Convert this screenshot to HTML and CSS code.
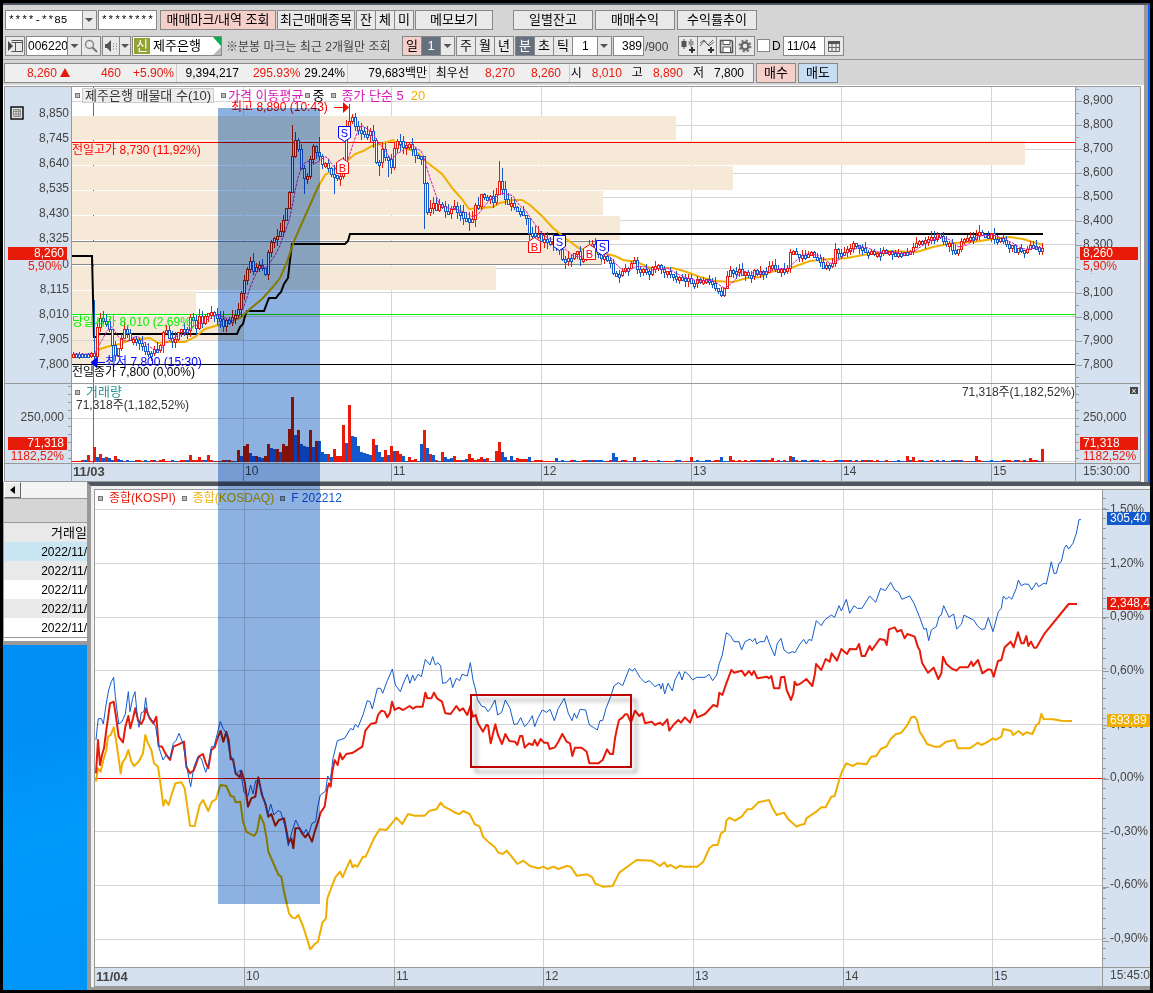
FILE: index.html
```html
<!DOCTYPE html>
<html lang="ko">
<head>
<meta charset="utf-8">
<title>제주은행 분봉 차트</title>
<link rel="stylesheet" href="styles.css">
</head>
<body>
<main class="desktop">
  <section class="window">
    <div class="window-body">
      <div class="toolbar">
        <span class="combo account"><select class="field" aria-label="계좌번호"><option>****-**85</option></select></span>
        <input class="box password" type="text" aria-label="비밀번호" value="********">
        <button class="btn pink w116">매매마크/내역 조회</button>
        <button class="btn w78">최근매매종목</button>
        <div class="group"><button class="btn w20">잔</button><button class="btn w20">체</button><button class="btn w20">미</button></div>
        <button class="btn w78">메모보기</button>
        <button class="btn w80 apart">일별잔고</button>
        <button class="btn w80">매매수익</button>
        <button class="btn w80">수익률추이</button>
      </div>

      <div class="toolbar second">
        <button class="btn w20" aria-label="패널"><svg width="16" height="14" viewBox="0 0 16 14"><path d="M4.500 1.500H15.500V12.500H4.500M8.500 4V12M4.500 3.500H15.500" fill="none" stroke="#555"/><path d="M1 2v10l5-5z" fill="#444"/></svg></button>
        <div class="group code">
          <input class="box w42" type="text" aria-label="종목코드" value="006220"><button class="btn w15" aria-label="목록"><i class="down"></i></button><button class="btn w20" aria-label="검색"><svg width="14" height="14" viewBox="0 0 14 14"><circle cx="5.500" cy="5.500" r="4" fill="none" stroke="#888" stroke-width="1.500"/><path d="M8.500 8.500L13 13" stroke="#777" stroke-width="2"/></svg></button>
        </div>
        <div class="group sound">
          <button class="btn w18" aria-label="소리"><svg width="14" height="12" viewBox="0 0 14 12"><path d="M1 4h2l4-4v12L3 8H1z" fill="#555"/><path d="M9 4h1M12 4h1M9 6.500h1M12 6.500h1M9 9h1M12 9h1" stroke="#777"/></svg></button><button class="btn w12" aria-label="소리 설정"><i class="down"></i></button>
        </div>
        <div class="stock"><span class="badge">신</span><b>제주은행</b><svg width="8" height="18" viewBox="0 0 8 18"><path d="M0 0h8v9z" fill="#0aa84f"/><path d="M8 10v8H0z" fill="#bbb"/></svg></div>
        <span class="note">※분봉 마크는 최근 2개월만 조회</span>
        <div class="group"><button class="btn w20 pink">일</button><button class="btn w20 dark">1</button><button class="btn w15" aria-label="일 선택"><i class="down"></i></button></div>
        <div class="group"><button class="btn w20">주</button><button class="btn w20">월</button><button class="btn w20">년</button></div>
        <div class="group"><button class="btn w20 dark">분</button><button class="btn w20">초</button><button class="btn w20">틱</button><span class="combo minute"><select class="field" aria-label="분 단위"><option>1</option></select></span></div>
        <div class="group"><input class="box count" type="text" aria-label="봉 개수" value="389"><span class="total">/900</span></div>
        <div class="group tools">
          <button class="btn w20" aria-label="봉 추가"><svg width="16" height="16" viewBox="0 0 16 16"><path d="M4 1v10M11 1v8" stroke="#555"/><path d="M1.500 3h5v6h-5z" fill="#555"/><path d="M8.500 3h5v4h-5z" fill="#999"/><path d="M12 9v6M9 12h6" stroke="#333" stroke-width="2"/></svg></button><button class="btn w20" aria-label="지표 추가"><svg width="16" height="16" viewBox="0 0 16 16"><path d="M1 5l4-3 4 5 5-5M1 8l4-5 5 5 5-4" fill="none" stroke="#666"/><path d="M12 9v6M9 12h6" stroke="#333" stroke-width="2"/></svg></button><button class="btn w20" aria-label="저장"><svg width="15" height="15" viewBox="0 0 15 15"><path d="M1.500 1.500h11l1 1v11h-12z" fill="#ddd" stroke="#555" stroke-width="1.500"/><path d="M4 1.500h7v4H4zM4 8h7.500v5.500H4z" fill="#fff" stroke="#555"/></svg></button><button class="btn w20" aria-label="설정"><svg width="14" height="14" viewBox="0 0 14 14"><circle cx="7" cy="7" r="5.500" fill="none" stroke="#777" stroke-width="2" stroke-dasharray="2.300 2"/><circle cx="7" cy="7" r="3.500" fill="none" stroke="#666" stroke-width="2.500"/></svg></button>
        </div>
        <label class="daily"><input type="checkbox">D</label>
        <div class="group"><input class="box w42" type="text" aria-label="날짜" value="11/04"><button class="btn w20" aria-label="달력"><svg width="12" height="12" viewBox="0 0 12 12"><path d="M.5 2.500h11v9H.5zM4 4v7M8 4v7M1 7.500h10" fill="none" stroke="#666"/><path d="M0 1h12v3H0z" fill="#555"/></svg></button></div>
      </div>

      <div class="quotes">
        <div class="quote-bar">
          <div class="cell c1"><em>8,260</em><svg width="10" height="9" viewBox="0 0 10 9"><path d="M5 0l5 9H0z" fill="#e81a0a"/></svg><em>460</em><em>+5.90%</em></div>
          <div class="cell c2"><span>9,394,217</span><em>295.93%</em><span>29.24%</span></div>
          <div class="cell c3"><span>79,683백만</span></div>
          <div class="cell c4"><span>최우선</span><em>8,270</em><em>8,260</em></div>
          <div class="cell c5"><span>시</span><em>8,010</em><span>고</span><em>8,890</em><span>저</span><span>7,800</span></div>
        </div>
        <button class="btn w40 pink">매수</button>
        <button class="btn w40 sky">매도</button>
      </div>

      <div class="sheet">
      <div class="chart stock-chart">
        <div class="axis left price-left">
          <span class="grid-icon"><svg width="14" height="14" viewBox="0 0 14 14"><rect x="1" y="1" width="12" height="12" fill="#e4e4e4" stroke="#111" stroke-width="1.500"/><path d="M3.500 3.500h7v7h-7zM3.500 5.500h7M3.500 8h7M6 3.500v7M8.500 3.500v7" fill="none" stroke="#888"/></svg></span>
          <span>8,850</span><span>8,745</span><span>8,640</span><span>8,535</span><span>8,430</span><span>8,325</span><span>8,220</span><span>8,115</span><span>8,010</span><span>7,905</span><span>7,800</span>
          <strong class="tag now">8,260</strong><strong class="rate">5,90%</strong>
        </div>
        <div class="plot price-plot">
          <svg class="canvas" viewBox="72 87 1003 296" preserveAspectRatio="none">
            <path class="grid" d="M72 101.500H1075M72 125.500H1075M72 149.500H1075M72 173.500H1075M72 197.500H1075M72 220.500H1075M72 244.500H1075M72 268.500H1075M72 292.500H1075M72 316.500H1075M72 340.500H1075M243.500 87V383M391.500 87V383M541.500 87V383M691.500 87V383M841.500 87V383M991.500 87V383"/>
            <path d="M93.500 87V383" stroke="#d84040"/>
            <path fill="#f6e9d7" d="M72 116H676V140H72zM72 141H1025V165H72zM72 166H733V190H72zM72 191H603V215H72zM72 216H620V240H72zM72 266H496V290H72zM72 291H196V315H72zM72 316H243V340H72zM72 341H113V364H72z"/>
            <path fill="#f6e9d7" stroke="#888" d="M71 241.500H601.500V264.500H71z"/>
            <path stroke="#f00" d="M72 142.500H1075"/>
            <path stroke="#00f000" d="M72 314.500H1075"/>
            <path stroke="#000" d="M72 364.500H1075"/>
            <path class="series" stroke="#000" d="M72 256H92L93 297L94 337H97L99 334H237L240 327L243 324L245 316L247 311H264L267 303L269 298H276L279 294L281 292L284 284L288 278L290 260L292 244H345L348 241L350 234H1043"/>
            <polyline class="series" stroke="#f0b000" points="72,357 93,355 100,349 110,346 120,344 130,340 140,339 150,338 158,343 165,342 185,342 195,337 205,329 215,326 225,324 240,318 250,309 262,299 272,288 280,278 287,262 294,241 302,223 310,205 318,187 325,175 330,172 339,166 348,160 355,154 363,151 372,146 387,142 393,140 403,147 418,153 423,159 433,167 442,174 453,189 462,199 469,209 493,207 500,203 513,200 522,200 530,205 542,216 553,228 565,238 580,249 607,254 615,256 623,260 637,262 650,268 673,268 687,272 700,277 715,281 733,282 747,278 760,277 770,272 788,269 810,261 830,259 847,258 863,255 887,251 917,252 933,247 953,243 973,242 993,239 1010,237 1023,239 1043,245"/>
            <g id="candles"></g>
            <path d="M334 107.500H348M93 362.500H103" stroke="#f00"/>
            <path d="M343 102l6 5.500-6 5.500z" fill="#f00"/>
            <path d="M91 362.500l6-5v10zM97 362.500h8" fill="#00f" stroke="#00f"/>
            <g class="mark sell"><path d="M338.500 126.500h12v11l-6 4-6-4z"/><text x="344.500" y="137">S</text><path d="M553.500 235.500h12v11l-6 4-6-4z"/><text x="559.500" y="246">S</text><path d="M596.500 240.500h12v11l-6 4-6-4z"/><text x="602.500" y="251">S</text></g>
            <g class="mark buy"><path d="M336.500 173.500h12v-11l-6-4-6 4z"/><text x="342.500" y="172">B</text><path d="M528.500 252.500h12v-11l-6-4-6 4z"/><text x="534.500" y="251">B</text><path d="M583.500 259.500h12v-11l-6-4-6 4z"/><text x="589.500" y="258">B</text></g>
          </svg>
          <div class="legend"><i class="dot"></i><span class="chip">제주은행 매물대 수(10)</span><i class="dot"></i><span class="magenta">가격 이동평균</span><i class="dot"></i><span>중</span><i class="dot gap"></i><span class="magenta">종가 단순 5</span><span class="gold">20</span></div>
          <span class="label high">최고 8,890 (10:43)</span>
          <span class="label prev-high">전일고가 8,730 (11,92%)</span>
          <span class="label day-open">당일시가 8,010 (2,69%)</span>
          <span class="label low">최저 7,800 (15:30)</span>
          <span class="label prev-close">전일종가 7,800 (0,00%)</span>
        </div>
        <div class="axis right price-right">
          <span>8,900</span><span>8,800</span><span>8,700</span><span>8,600</span><span>8,500</span><span>8,400</span><span>8,300</span><span>8,200</span><span>8,100</span><span>8,000</span><span>7,900</span><span>7,800</span>
          <strong class="tag now">8,260</strong><strong class="rate">5,90%</strong>
        </div>

        <div class="axis left vol-axis rule"><span>250,000</span><strong class="tag">71,318</strong><strong class="rate">1182,52%</strong></div>
        <div class="plot vol-plot rule">
          <svg class="canvas" viewBox="72 384 1003 79" preserveAspectRatio="none">
            <path class="grid" d="M72 418.500H1075M243.500 384V463M391.500 384V463M541.500 384V463M691.500 384V463M841.500 384V463M991.500 384V463M1043 461.500H1075"/>
            <path d="M93.500 384V463" stroke="#d84040"/>
            <g id="volume"></g>
          </svg>
          <div class="legend"><i class="dot"></i><span class="teal">거래량</span></div>
          <span class="label vol-text">71,318주(1,182,52%)</span>
          <span class="label vol-right">71,318주(1,182,52%)</span>
        </div>
        <div class="axis right vol-axis rule"><button class="close" aria-label="닫기">×</button><span>250,000</span><strong class="tag">71,318</strong><strong class="rate">1182,52%</strong></div>

        <div class="axis rule"></div>
        <div class="plot times times-day rule"><b>11/03</b><span>10</span><span>11</span><span>12</span><span>13</span><span>14</span><span>15</span></div>
        <div class="axis right rule clock">15:30:00</div>
      </div>
      </div>
    </div>
  </section>

  <div class="lower">
    <section class="ledger">
      <div class="scroll"><button aria-label="왼쪽으로"><svg width="6" height="8" viewBox="0 0 6 8"><path d="M5 0v8L0 4z" fill="#000"/></svg></button></div>
      <table>
        <thead><tr><th>거래일</th></tr></thead>
        <tbody><tr class="chosen"><td>2022/11/</td></tr><tr><td>2022/11/</td></tr><tr><td>2022/11/</td></tr><tr><td>2022/11/</td></tr><tr><td>2022/11/</td></tr></tbody>
      </table>
    </section>

    <section class="index-window">
      <div class="chart index-chart">
        <div class="plot index-plot">
          <svg class="canvas" viewBox="95 490 1007 477" preserveAspectRatio="none">
            <path class="grid" d="M95 509.500H1102M95 563.500H1102M95 617.500H1102M95 670.500H1102M95 724.500H1102M95 831.500H1102M95 885.500H1102M95 939.500H1102M244.500 490V967M394.500 490V967M543.500 490V967M693.500 490V967M843.500 490V967M992.500 490V967"/>
            <path stroke="#f00" d="M95 778.500H1102"/>
            <g transform="translate(88 640) scale(.333333)" class="lines">
              <polyline class="kosdaq" points="24,425 30,385 38,395 46,360 55,330 60,290 68,285 77,262 84,300 92,355 98,400 103,368 112,355 121,330 130,365 138,378 152,365 165,340 172,285 180,310 190,330 198,370 210,380 218,435 226,497 232,480 242,495 252,460 262,430 280,427 290,445 298,500 306,557 320,558 335,495 345,480 352,495 361,513 372,485 384,478 392,450 398,435 415,438 428,468 437,470 443,487 457,485 465,545 475,575 498,588 507,575 516,525 528,552 535,590 541,635 552,660 565,690 572,705 580,710 587,750 596,790 603,820 612,832 622,835 631,825 645,858 655,890 667,928 680,912 690,905 703,848 714,835 718,775 728,748 742,712 756,695 764,712 775,685 787,660 794,682 800,675 808,680 825,650 833,650 858,595 875,568 895,570 910,552 925,533 943,552 960,522 980,527 1010,527 1025,512 1045,508 1058,488 1068,500 1085,508 1105,520 1115,522 1125,513 1145,522 1160,552 1175,560 1185,590 1200,605"/>
              <polyline class="kospi" points="24,400 30,300 36,375 42,345 48,325 55,270 60,235 66,190 77,185 84,230 92,290 105,307 112,260 121,228 127,265 135,235 142,205 150,240 160,252 168,235 173,205 185,235 196,250 205,230 212,318 222,320 232,340 246,360 256,320 272,313 288,305 295,380 306,400 318,390 332,350 345,342 353,368 361,385 370,330 380,322 390,290 398,273 406,305 415,275 422,300 428,358 435,358 443,400 455,412 460,392 470,425 480,500 490,475 502,470 511,412 522,465 532,490 541,530 550,522 562,557 573,540 588,535 597,580 602,608 610,595 616,625 622,565 635,565 642,580 652,592 660,580 672,605 680,575 690,545 698,517 710,500 718,445 723,430 728,440 733,395 740,360 749,375 756,340 763,358 775,342 795,338 823,320 832,272 848,252 864,248 870,225 880,212 890,215 898,232 906,218 912,185 920,210 932,203 945,210 965,198 975,206 985,200 1004,200 1012,158 1018,175 1030,175 1038,158 1047,175 1062,185 1072,220 1088,222 1105,198 1115,212 1125,205 1138,225 1147,198 1155,230 1163,225 1170,250 1185,275 1195,255 1200,255"/>
              <polyline class="futures" points="24,300 28,260 31,236 40,236 46,252 54,195 62,150 70,125 77,112 82,170 92,252 102,245 112,222 121,155 126,215 134,175 141,155 148,230 153,262 160,218 168,215 173,173 180,225 192,240 203,260 212,320 225,360 235,345 246,355 256,310 265,300 273,280 285,310 297,385 308,440 318,380 330,350 340,355 353,397 362,370 370,320 378,320 388,280 397,245 405,265 415,280 425,340 435,360 443,405 457,390 468,457 480,468 488,435 495,462 503,422 513,425 525,470 540,525 548,492 558,525 570,512 578,515 590,555 601,618 612,575 623,540 635,565 648,580 654,568 662,583 672,550 683,545 690,495 697,465 713,453 719,408 727,422 735,355 748,302 770,295 788,265 795,270 802,253 810,262 825,225 838,182 846,185 853,207 868,145 878,145 884,160 898,122 913,87 922,135 937,155 948,125 958,103 966,130 974,105 980,122 990,103 1000,110 1012,58 1026,75 1034,50 1042,75 1050,68 1058,78 1064,130 1075,128 1087,113 1094,143 1105,115 1115,122 1122,103 1138,108 1147,68 1155,120 1163,150 1168,178 1182,200 1190,200 1200,215"/>
            </g>
            <g transform="translate(400 480) scale(.333333)" class="lines">
              <polyline class="futures" points="264,695 272,685 285,660 293,705 305,697 316,660 330,685 342,733 352,732 362,713 374,740 385,728 397,707 404,740 415,712 427,690 440,697 450,688 463,722 475,685 493,655 505,700 516,722 523,700 530,715 540,688 557,690 568,735 580,742 592,750 600,722 608,722 618,685 632,650 642,618 655,608 668,617 688,565 697,573 704,565 720,592 735,608 748,602 765,620 778,612 783,627 788,610 794,642 804,610 817,633 825,600 838,575 846,600 854,575 865,583 878,600 890,592 915,592 927,583 938,602 950,585 958,550 967,525 979,458 992,468 1002,485 1017,485 1025,510 1035,485 1050,477 1058,485 1065,475 1070,492 1080,485 1093,485 1100,467 1110,495 1124,528 1132,490 1143,475 1152,510 1165,520 1178,515 1185,518 1200,492"/>
              <polyline class="kosdaq" points="264,1085 285,1102 295,1118 308,1122 320,1112 335,1130 352,1152 370,1142 390,1158 415,1165 430,1160 442,1167 460,1160 475,1167 500,1158 512,1160 530,1187 562,1183 577,1192 585,1210 608,1220 638,1218 658,1178 685,1158 710,1140 755,1142 780,1158 793,1147 802,1160 812,1155 828,1165 840,1157 852,1160 892,1160 910,1145 928,1105 940,1095 953,1095 963,1060 975,1052 979,1022 988,1013 1005,1022 1025,1010 1042,988 1055,987 1075,967 1107,960 1118,985 1130,1005 1152,998 1165,1018 1190,1040 1200,1035"/>
              <polyline class="kospi" points="264,735 272,790 286,733 294,765 306,792 316,762 328,783 345,785 352,795 360,768 367,768 374,803 387,790 398,795 404,780 412,797 422,777 432,788 443,788 449,807 465,802 475,785 487,762 500,785 510,790 517,828 525,803 545,803 560,815 568,850 595,850 608,840 621,808 630,822 639,822 645,775 650,750 657,720 668,712 675,703 682,703 693,727 705,692 718,708 727,700 735,730 755,725 765,735 780,728 788,735 802,718 808,752 820,735 835,720 843,728 855,712 870,728 884,690 892,712 915,702 940,675 952,680 958,638 967,645 979,610 994,570 1002,578 1025,572 1035,587 1047,573 1055,585 1062,573 1072,595 1100,590 1107,595 1114,588 1122,625 1138,625 1143,592 1153,590 1160,630 1173,660 1180,640 1184,605 1190,615 1200,612"/>
            </g>
            <g transform="translate(753 560) scale(.333333)" class="lines">
              <polyline class="futures" points="141,252 152,238 160,252 168,238 176,242 190,182 205,197 215,180 235,165 245,172 258,137 265,153 280,118 290,160 303,137 313,145 327,145 350,108 368,127 383,85 397,92 413,67 425,90 437,97 447,118 470,108 483,130 500,172 513,208 520,205 527,242 535,210 550,200 558,170 565,165 572,137 588,172 602,162 611,207 625,193 633,165 645,172 662,180 673,197 685,208 695,207 706,173 720,215 736,155 745,145 751,108 760,118 768,110 776,118 790,85 796,60 805,77 815,72 827,73 836,90 850,68 857,80 872,70 880,72 895,5 903,40 910,40 918,10 925,5 934,-35 940,-45 947,-33 960,-50 970,-80 978,-121 984,-121"/>
              <polyline class="kosdaq" points="141,795 155,792 160,775 190,755 205,742 218,742 235,710 245,708 260,655 268,632 280,610 300,618 312,610 340,613 355,590 370,588 383,567 400,560 413,537 428,523 445,518 462,497 475,472 485,470 492,480 500,515 513,535 522,552 545,560 560,560 580,545 605,540 615,565 650,565 665,555 675,548 685,555 700,548 720,535 728,540 745,530 751,507 775,513 780,525 797,513 810,525 820,517 838,522 850,495 858,490 865,462 872,477 900,478 925,482 957,483"/>
              <polyline class="kospi" points="141,372 160,357 178,378 186,340 189,312 205,330 218,297 230,305 236,280 252,302 265,267 282,282 290,267 310,268 318,252 326,288 336,288 350,258 357,270 380,237 395,240 401,255 408,208 425,202 433,215 445,210 455,235 463,222 485,230 495,262 500,270 507,308 525,338 542,323 556,357 565,340 570,290 580,312 595,325 610,332 620,322 645,322 655,305 660,318 675,300 688,340 705,328 715,330 722,350 735,303 745,300 755,262 773,245 782,262 795,217 805,250 812,250 820,228 826,258 834,245 843,263 850,263 875,220 947,132 972,132"/>
            </g>
          </svg>
          <div class="legend"><i class="dot"></i><span class="red">종합(KOSPI)</span><i class="dot"></i><span class="gold">종합(KOSDAQ)</span><i class="dot"></i><span class="blue">F 202212</span></div>
          <div class="callout"></div>
        </div>
        <div class="axis right percent">
          <span>1,50%</span><span>1,20%</span><span>0,90%</span><span>0,60%</span><span>0,30%</span><span>0,00%</span><span>-0,30%</span><span>-0,60%</span><span>-0,90%</span>
          <strong class="tag t-blue">305,40</strong><strong class="tag t-red">2,348,43</strong><strong class="tag t-gold">693,89</strong>
        </div>
        <div class="plot times times-index rule"><b>11/04</b><span>10</span><span>11</span><span>12</span><span>13</span><span>14</span><span>15</span></div>
        <div class="axis right rule clock">15:45:00</div>
      </div>
    </section>
  </div>
  <div class="band"></div>
</main>
<script src="chart.js"></script>
</body>
</html>
```
FILE: styles.css
```css
* { box-sizing: border-box; }
body {
  margin: 0;
  background: #000;
  color: #000;
  font: 12px/14px "Liberation Sans", "Noto Sans CJK KR", sans-serif;
}
button, input, select { font: inherit; color: inherit; margin: 0; padding: 0; border-radius: 0; }
em, i { font-style: normal; }
em { color: #e81a0a; }

.desktop {
  position: relative;
  display: flex;
  flex-direction: column;
  min-height: 100vh;
  padding: 3px;
  overflow: hidden;
}
.window {
  background: #d5d5d5;
  border-top: 2px solid #50565f;
  border-right: 2px solid #0062ff;
}
.window-body { border-right: 4px solid #999; }

/* toolbars */
.toolbar { display: flex; gap: 1px; padding: 5px 2px 0; height: 26px; white-space: nowrap; }
.toolbar.second { padding-top: 5px; height: 29px; align-items: flex-start; border-bottom: 1px solid #999; }
.box, .btn, .combo, .stock {
  height: 20px;
  border: 1px solid #888;
  background: #fff;
  flex: none;
}
.btn { background: #e9e9e9; font-size: 13px; line-height: 16px; text-align: center; white-space: nowrap; }
.btn svg { display: block; margin: auto; }
.box { padding: 0 3px; min-width: 0; }
.group { display: flex; flex: none; }
.group > * + * { margin-left: -1px; }
.w12 { width: 12px; }
.w15 { width: 15px; }
.w18 { width: 18px; }
.w20 { width: 20px; }
.w40 { width: 40px; }
.w42 { width: 42px; }
.w78 { width: 78px; }
.w80 { width: 80px; margin-left: 1px; }
.w116 { width: 116px; margin-left: 2px; }
.apart { margin-left: 19px; }
.pink { background: #f5cfc9; }
.sky { background: #c6ddf3; }
.dark { background: #66717f; color: #fff; }
.down {
  display: block;
  width: 8px;
  height: 4px;
  margin: auto;
  background: #555;
  clip-path: polygon(0 0, 100% 0, 50% 100%);
}
.combo { position: relative; display: block; }
.combo::after {
  content: "";
  position: absolute;
  top: 7px;
  right: 3px;
  width: 8px;
  height: 4px;
  background: #555;
  clip-path: polygon(0 0, 100% 0, 50% 100%);
}
.field {
  display: block;
  width: 100%;
  height: 18px;
  padding: 0 3px;
  border: 0;
  appearance: none;
  background: linear-gradient(90deg, #888 1px, #e9e9e9 1px) right / 14px 100% no-repeat #fff;
}
.account { width: 92px; }
.password { width: 59px; }
.account .field, .password { font: 11px "Liberation Mono", monospace; padding: 0 2px; }
.minute { width: 40px; }
.minute .field { padding-left: 9px; }
.code { width: 75px; }
.code .box { padding: 0 0 0 1px; }
.sound { width: 29px; }
.stock { width: 90px; display: flex; align-items: center; gap: 3px; padding-left: 1px; }
.stock b { flex: 1; font-weight: 400; font-size: 13px; }
.badge { width: 16px; height: 16px; background: #93a233; color: #fff; font-size: 13px; line-height: 15px; text-align: center; }
.note { width: 178px; padding-left: 3px; color: #444; line-height: 22px; font-size: 12px; }
.count { width: 31px; padding: 0 1px; text-align: right; }
.total { width: 26px; color: #444; line-height: 22px; padding-left: 2px; }
.tools { margin-left: 8px; }
.daily { display: flex; align-items: center; gap: 2px; width: 25px; height: 19px; margin-left: 1px; }
.daily input { appearance: none; width: 13px; height: 13px; border: 1px solid #888; background: #fff; }

.quotes { display: flex; gap: 2px; padding: 3px 1px 2px; height: 25px; }
.quote-bar { display: flex; width: 750px; height: 20px; border: 1px solid #888; background: #efefef; line-height: 18px; }
.cell { display: flex; align-items: baseline; justify-content: flex-end; border-right: 1px solid #ccc; padding-right: 2px; white-space: nowrap; }
.cell:last-child { border: 0; }
.c1 { width: 172px; gap: 12px; }
.c1 svg { margin: 0 19px 0 -9px; }
.c2 { width: 171px; gap: 4px; }
.c2 span:first-child { margin-right: 10px; }
.c3 { width: 82px; }
.c4 { width: 140px; gap: 16px; padding-right: 8px; }
.c5 { flex: 1; gap: 10px; padding-right: 9px; }

/* charts */
.sheet { background: #fff; padding: 1px 3px 0 1px; }
.chart { display: grid; border: 1px solid #999; background: #fff; }
.stock-chart { grid-template-columns: 66px 1fr 64px; grid-template-rows: 296px 80px 18px; }
.rule { border-top: 1px solid #999; }
.axis { position: relative; background: #d6e1ef; color: #444; overflow: hidden; }
.axis span { display: block; }
.axis strong { position: absolute; font-weight: 400; height: 13px; line-height: 13px; }
.left { text-align: right; }
.left strong { left: 3px; width: 59px; padding-right: 3px; }
.right { padding-left: 7px; }
.right strong { left: 4px; width: 58px; padding-left: 3px; }
.axis .rate { color: #e81a0a; background: #d6e1ef; }
.axis .tag { background: #e81a0a; color: #fff; }
.axis .now { top: 160px; }
.now + .rate { top: 173px; }
.price-left .now + .rate { width: 54px; padding-right: 0; }
.price-left { display: flex; flex-direction: column; justify-content: space-between; padding: 19px 2px 12px 0; }
.price-left .grid-icon { position: absolute; left: 5px; top: 19px; }
.price-right {
  padding-top: 1px;
  background:
    linear-gradient(#999 1px, transparent 1px) 0 14px / 6px 24px repeat-y,
    linear-gradient(#999 1px, transparent 1px) 0 2px / 3px 24px repeat-y, #d6e1ef;
}
.price-right span { line-height: 24px; }
.vol-axis { padding-top: 26px; }
.vol-axis.left { padding-right: 7px; background: linear-gradient(#999 1px, transparent 1px) right 2px / 3px 8px repeat-y, #d6e1ef; }
.vol-axis.right { background: linear-gradient(#999 1px, transparent 1px) 0 2px / 3px 8px repeat-y, #d6e1ef; }
.vol-axis .tag { top: 53px; }
.vol-axis .rate { top: 66px; height: 12px; line-height: 12px; }
.close {
  position: absolute;
  top: 3px;
  right: 2px;
  width: 8px;
  height: 7px;
  border: 0;
  background: #444;
  color: #fff;
  font-size: 9px;
  line-height: 6px;
}
.plot { position: relative; border-left: 1px solid #999; border-right: 1px solid #999; min-width: 0; }
.canvas { display: block; position: absolute; inset: 0; width: 100%; height: 100%; }
.grid { fill: none; stroke: #d5d5d5; }
.series { fill: none; stroke-width: 2; }
.mark path { fill: #fff; }
.mark text { font: 11px "Liberation Sans", sans-serif; text-anchor: middle; stroke: none; }
.sell path { stroke: #00f; }
.sell text { fill: #00f; }
.buy path { stroke: #f00; }
.buy text { fill: #f00; }
.legend { position: absolute; left: 3px; top: 1px; display: flex; align-items: center; gap: 5px; font-size: 13px; white-space: nowrap; }
.price-plot .legend { gap: 2px; }
.index-plot .legend { gap: 6px; font-size: 12px; }
.dot { width: 5px; height: 5px; border: 1px solid #777; background: #bbb; }
.chip { border: 1px solid #ccc; background: #ececec; color: #333; padding: 0 2px; height: 15px; line-height: 13px; margin-right: 5px; }
.legend .gap { margin: 0 3px 0 5px; }
.magenta { color: #d81ab4; }
.gold { color: #f0ae00; }
.magenta + .gold { margin-left: 5px; }
.teal { color: #2f9494; margin-left: 1px; }
.red { color: #e81a0a; }
.blue { color: #125acb; }
.label { position: absolute; white-space: nowrap; }
.high { left: 159px; top: 13px; color: #f00; }
.prev-high { left: 0; top: 56px; color: #f00; }
.day-open { left: 0; top: 228px; color: #00f000; }
.low { left: 33px; top: 268px; color: #00f; }
.prev-close { left: 0; top: 278px; }
.vol-text { left: 4px; top: 14px; color: #333; }
.vol-right { right: 0; top: 1px; color: #333; }
.times { display: grid; background: #d6e1ef; color: #444; line-height: 15px; }
.times b { font-size: 13px; padding-left: 1px; }
.times span { border-left: 1px solid #999; padding-left: 1px; }
.times-day { grid-template-columns: 171fr 148fr 150fr 150fr 150fr 150fr 84fr; }
.times-index { grid-template-columns: 149fr 150fr 149fr 150fr 150fr 149fr 110fr; line-height: 17px; }
.clock { line-height: 15px; white-space: nowrap; }

/* lower windows */
.lower { flex: 1; display: grid; grid-template-columns: 84px 1fr; background: linear-gradient(165deg, #008ef4 30%, #009afb 45%, #0093f7 70%, #009dff); }
.ledger { align-self: start; background: #fff; border-left: 1px solid #999; border-bottom: 4px solid #999; padding-bottom: 3px; }
.scroll { height: 17px; background: #f4f4f4; border-bottom: 1px solid #999; }
.scroll button { display: grid; place-items: center; width: 17px; height: 16px; border: 1px solid #fff; border-right-color: #666; border-bottom-color: #666; background: #ececec; }
table { width: 100%; border-spacing: 0; border-top: 23px solid #d5d5d5; border-bottom: 1px solid #999; }
th, td { height: 19px; padding: 0; text-align: right; font-weight: 400; }
th { height: 20px; background: #e9e9e9; font-size: 13px; border-top: 1px solid #999; }
tbody tr:nth-child(even) { background: #e9e9e9; }
tbody .chosen { background: #c9e6f2; }
.index-window { display: flex; padding: 3px 0 0 3px; background: #f0f0f0; border-top: 4px solid #50565f; border-left: 4px solid #999; border-bottom: 3px solid #999; }
.index-chart { flex: 1; border-right: 0; grid-template-columns: 1fr 47px; grid-template-rows: 1fr 19px; }
.index-chart .plot { border-left: 0; }
.percent {
  display: flex;
  flex-direction: column;
  padding: 12px 0 22px 7px;
  justify-content: space-between;
  background: linear-gradient(#999 1px, transparent 1px) 0 19px / 6px 54px repeat-y, linear-gradient(#999 1px, transparent 1px) 0 8px / 3px 10px repeat-y, #d6e1ef;
}
.percent .t-blue { top: 22px; background: #125acb; }
.percent .t-red { top: 107px; }
.percent .t-gold { top: 224px; background: #f0ae00; }
.callout {
  position: absolute;
  left: 375px;
  top: 204px;
  width: 162px;
  height: 74px;
  border: 2px solid #c00000;
  filter: drop-shadow(5px 5px 2px rgba(0, 0, 0, .35));
}
.lines polyline { fill: none; stroke-width: 6; stroke-linejoin: round; }
.lines .futures { stroke: #125acb; stroke-width: 3; }
.lines .kospi { stroke: #e81a0a; }
.lines .kosdaq { stroke: #f0ae00; }
.band {
  position: absolute;
  left: 218px;
  top: 108px;
  width: 102px;
  height: 796px;
  background: #8db1e1;
  mix-blend-mode: multiply;
  pointer-events: none;
}
```
FILE: chart.js
```js
const NS = "http://www.w3.org/2000/svg";
const RED = "#e81a0a";
const BLUE = "#125acb";

function add(parent, name, attrs) {
  const node = document.createElementNS(NS, name);
  for (const key in attrs) node.setAttribute(key, attrs[key]);
  parent.appendChild(node);
}

let seed = 7;
function noise() {
  seed = (seed * 16807) % 2147483647;
  return seed / 2147483647;
}

// Closing price trail: x, y pairs in plot coordinates.
const trail = [
  72,355, 90,353, 93,355, 96,330, 100,312, 103,320, 107,325, 110,345, 114,352, 118,342, 123,331, 127,335, 132,340, 138,342,
  143,350, 148,352, 155,350, 160,340, 164,330, 168,338, 175,335, 182,332, 187,328, 190,314, 193,328, 198,320, 204,318,
  209,308, 213,318, 218,323, 225,321, 232,317, 236,315, 240,295, 244,270, 248,262, 254,272, 258,264, 264,272, 268,245,
  271,243, 275,235, 280,228, 284,208, 288,195, 291,160, 293,136, 296,145, 299,165, 302,180, 306,172, 310,152, 314,147,
  317,150, 320,168, 325,165, 330,170, 335,180, 338,183, 341,172, 343,150, 345,125, 348,120, 350,112, 353,125, 357,128,
  362,130, 367,132, 372,138, 375,160, 378,160, 381,152, 386,158, 391,165, 394,142, 398,142, 402,148, 408,148, 414,158,
  419,152, 422,160, 424,205, 427,212, 431,200, 436,210, 441,205, 447,215, 452,203, 457,210, 463,218, 468,225, 472,212,
  476,205, 480,196, 486,198, 493,203, 497,185, 499,175, 503,195, 508,205, 513,208, 520,215, 525,222, 530,236, 538,238,
  545,243, 552,243, 556,240, 561,255, 567,261, 573,250, 580,258, 585,250, 590,243, 597,254, 604,255, 610,268, 617,278,
  622,272, 628,268, 632,260, 637,270, 643,268, 650,272, 655,262, 662,270, 670,274, 680,277, 688,280, 692,286, 700,278,
  712,283, 720,292, 724,285, 728,272, 738,272, 748,275, 760,271, 772,266, 776,272, 786,270, 790,250, 796,254, 803,254,
  808,253, 815,258, 822,267, 830,264, 834,250, 842,252, 850,246, 858,244, 864,250, 872,255, 880,253, 889,251, 900,255,
  906,252, 914,243, 925,242, 937,236, 943,240, 950,248, 954,254, 962,240, 970,240, 978,230, 983,238, 992,236, 1000,238,
  1007,246, 1016,250, 1025,247, 1036,247, 1043,252
];

function level(x) {
  for (let i = 2; i < trail.length; i += 2) {
    if (x <= trail[i]) {
      const t = (x - trail[i - 2]) / (trail[i] - trail[i - 2]);
      return trail[i - 1] + t * (trail[i + 1] - trail[i - 1]);
    }
  }
  return trail[trail.length - 1];
}

// Longer wicks: position, top, bottom.
const wicks = [[291,125,165],[297,138,152],[303,165,194],[318,137,160],[333,165,194],[348,104,125],[378,160,176],[387,155,177],
  [423,158,229],[468,212,231],[498,161,190],[501,168,195],[528,230,242],[717,288,294],[618,270,283],[978,225,240],[93,300,362],[111,335,362]];

const candles = document.getElementById("candles");
const closes = [];
let previous = 355;
for (let x = 72; x <= 1041; x += 3) {
  const swing = x < 95 ? 2 : x < 610 ? 8 : 6;
  const close = Math.round(level(x) + (noise() - .5) * swing);
  const up = close < previous;
  const color = up ? RED : BLUE;
  const top = Math.min(close, previous);
  const height = Math.max(Math.abs(close - previous), 3);
  const wick = wicks.find(w => Math.abs(w[0] - x) < 2);
  const y1 = wick ? Math.min(wick[1], top) : top - Math.round(noise() * swing);
  const y2 = wick ? Math.max(wick[2], top + height) : top + height + Math.round(noise() * swing);
  add(candles, "path", { d: `M${x + 1.5} ${y1}V${y2}`, stroke: color });
  add(candles, "rect", { x: x + .5, y: top + .5, width: 2, height: height, fill: "#fff", stroke: color });
  closes.push(close);
  previous = close;
}
const average = closes.map((_, i) => {
  const part = closes.slice(Math.max(0, i - 5), i + 1);
  return `${73 + i * 3},${part.reduce((a, b) => a + b) / part.length}`;
});
add(candles, "polyline", { points: average.join(" "), fill: "none", stroke: "#d81ab4", "stroke-dasharray": "3 1" });

// Volume peaks: x, height, direction (1 rising, 0 falling).
const peaks = [87,7,1, 93,15,1, 96,5,0, 99,8,1, 102,4,0, 105,5,1, 108,4,0, 114,6,1, 117,3,0, 162,3,1, 189,7,1, 198,5,1, 207,7,1,
  237,12,1, 240,6,0, 243,16,1, 246,18,1, 249,9,0, 252,6,0, 255,6,1, 258,5,0, 261,4,0, 264,6,1, 267,18,1, 270,14,0, 273,13,0,
  276,13,1, 279,10,0, 282,18,1, 285,16,1, 288,33,1, 291,65,1, 294,27,0, 297,32,1, 300,18,0, 303,16,0, 306,15,0, 309,32,1,
  312,15,0, 315,21,1, 318,21,0, 321,10,0, 324,8,0, 327,8,1, 330,5,0, 333,13,1, 336,6,1, 339,6,1, 342,37,1, 345,19,0, 348,57,1,
  351,26,0, 354,25,0, 357,16,0, 360,10,0, 363,9,0, 366,8,0, 369,7,0, 372,23,1, 375,17,0, 378,10,0, 381,5,0, 384,12,1, 387,7,0,
  390,16,1, 393,11,0, 396,11,1, 399,8,1, 402,6,0, 408,5,1, 420,18,0, 423,32,1, 426,14,0, 429,8,1, 432,7,0, 441,10,1, 444,5,0,
  453,6,1, 468,8,1, 471,4,1, 480,5,1, 495,11,1, 498,20,1, 501,10,0, 504,5,0, 510,6,0, 528,5,0, 555,4,0, 612,9,0, 615,5,0,
  633,5,1, 690,5,1, 720,5,0, 729,6,1, 771,4,1, 789,6,1, 792,5,0, 906,6,1, 912,5,1, 975,6,1, 1029,4,1, 1041,13,1];
const volume = document.getElementById("volume");
for (let x = 72; x <= 1041; x += 3) {
  const at = peaks.findIndex((v, i) => i % 3 === 0 && v === x);
  const height = at < 0 ? 1 + Math.round(noise() * (x > 300 && x < 530 ? 3 : 1)) : peaks[at + 1];
  const rising = at < 0 ? noise() > .5 : peaks[at + 2];
  add(volume, "rect", { x: x, y: 462 - height, width: 3, height: height, fill: rising ? RED : BLUE });
}
```
